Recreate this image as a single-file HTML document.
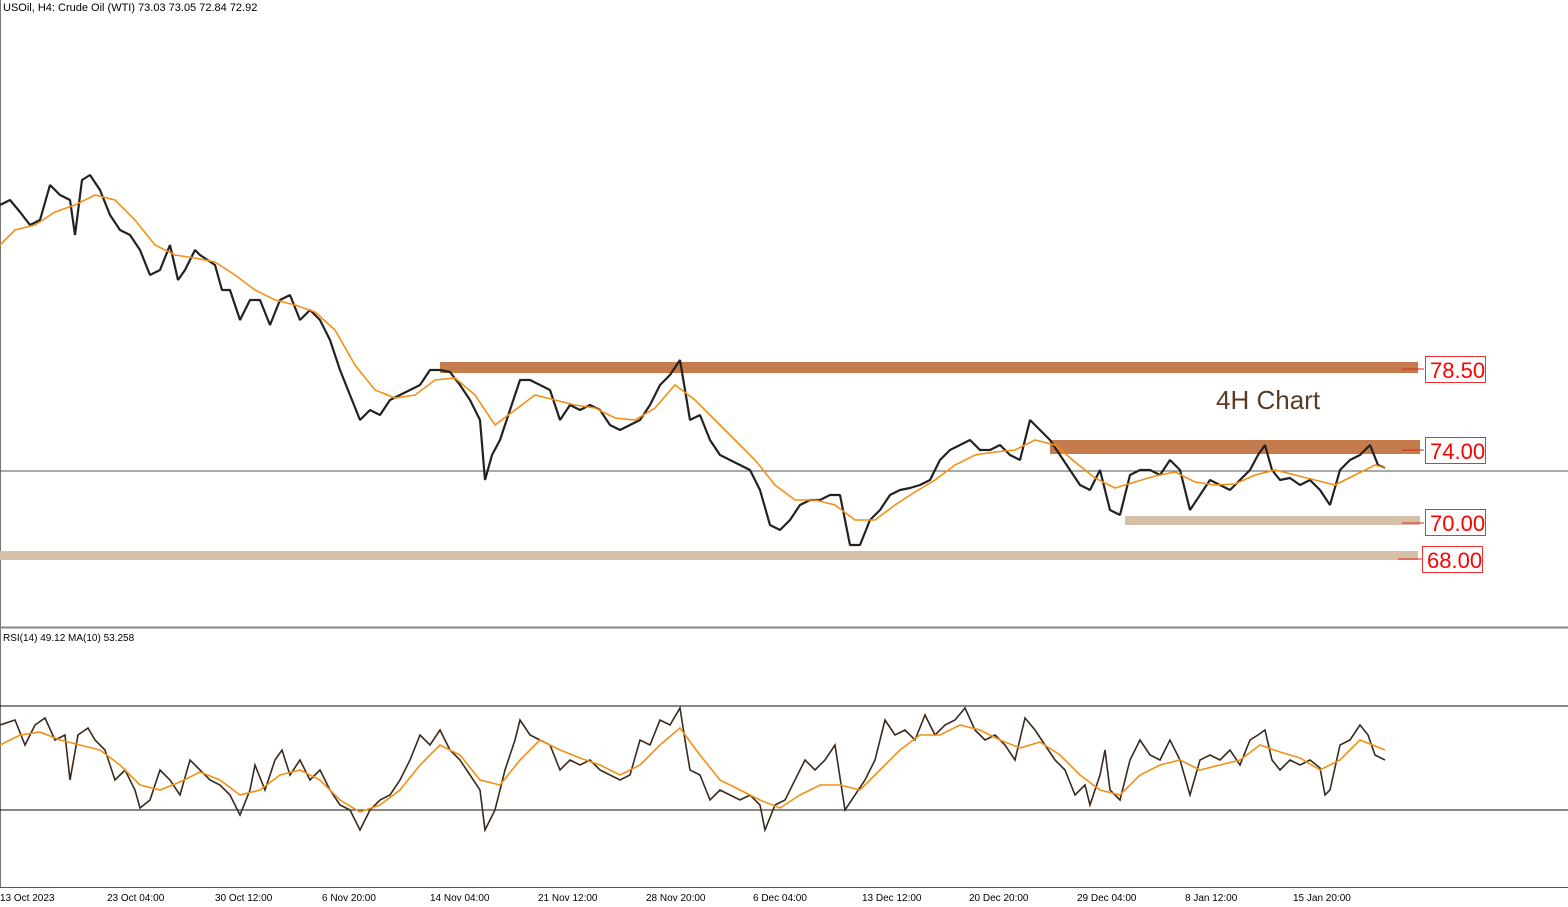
<!DOCTYPE html>
<html><head><meta charset="utf-8"><style>
html,body{margin:0;padding:0;background:#fff;width:1568px;height:907px;overflow:hidden;font-family:"Liberation Sans",sans-serif}
svg{display:block}
</style></head><body>
<svg width="1568" height="907" xmlns="http://www.w3.org/2000/svg" font-family="Liberation Sans, sans-serif">
<rect width="1568" height="907" fill="#fff"/>
<line x1="0.5" y1="0" x2="0.5" y2="887" stroke="#777"/>
<text x="3" y="11" font-size="11" fill="#000">USOil, H4:  Crude Oil (WTI)  73.03 73.05 72.84 72.92</text>
<!-- bands -->
<rect x="440" y="362" width="978" height="11" fill="#c47c4c"/>
<rect x="1050" y="440" width="370" height="14" fill="#c47c4c"/>
<rect x="1125" y="516" width="295" height="9" fill="#d6bfa7"/>
<rect x="0" y="551" width="1418" height="9" fill="#d6bfa7"/>
<line x1="0" y1="471" x2="1568" y2="471" stroke="#555" stroke-width="1"/>
<g stroke="#e02020" stroke-width="1"><line x1="1402" y1="369" x2="1424" y2="369"/><line x1="1402" y1="450" x2="1424" y2="450"/><line x1="1402" y1="523" x2="1424" y2="523"/><line x1="1398" y1="559" x2="1422" y2="559"/></g>
<g fill="#fff" stroke="#f03030"><rect x="1425.5" y="356.5" width="60" height="26"/><rect x="1425.5" y="437.5" width="60" height="26"/><rect x="1425.5" y="509.5" width="60" height="26"/><rect x="1422.5" y="546.5" width="60" height="26"/></g>
<g fill="#f00" font-size="22"><text x="1430" y="378">78.50</text><text x="1430" y="459">74.00</text><text x="1430" y="531">70.00</text><text x="1427" y="568">68.00</text></g>
<text x="1216" y="409" font-size="26" fill="#5a3a22">4H Chart</text>
<!-- price -->
<polyline fill="none" stroke="#222" stroke-width="2.2" stroke-linejoin="bevel" points="0,205 10,200 20,212 30,225 40,220 50,185 60,195 70,200 75,235 82,180 90,175 100,190 110,215 120,230 130,235 140,250 150,275 160,270 170,245 178,280 185,270 195,250 200,255 215,265 222,290 230,290 240,320 250,300 260,300 270,325 280,300 290,295 300,320 310,310 320,320 330,340 340,370 350,395 360,420 370,410 380,415 390,400 400,395 410,390 420,385 430,370 440,370 450,372 460,385 470,400 480,420 485,480 492,455 500,440 510,410 520,380 530,380 540,385 550,390 560,420 570,405 580,410 590,405 600,410 610,425 620,430 630,425 640,420 650,405 660,385 670,375 680,360 690,420 700,415 710,440 720,455 730,460 740,465 750,470 760,490 770,525 780,530 790,520 800,505 810,500 820,500 830,495 840,495 850,545 860,545 870,520 880,510 890,495 900,490 910,488 920,485 930,480 940,460 950,450 960,445 970,440 980,450 990,450 1000,445 1010,455 1020,460 1030,420 1040,430 1050,440 1060,455 1070,470 1080,485 1090,490 1100,470 1110,510 1120,515 1130,475 1140,470 1150,470 1160,475 1170,460 1180,470 1190,510 1200,495 1210,480 1220,485 1230,490 1240,480 1250,470 1258,455 1265,445 1272,470 1280,480 1290,478 1300,485 1310,480 1320,490 1330,505 1340,470 1350,460 1360,455 1370,445 1378,465 1385,468"/>
<polyline fill="none" stroke="#f39014" stroke-width="1.6" points="0,245 15,230 35,225 55,212 75,205 95,195 115,200 135,220 155,245 175,255 195,258 215,262 235,275 255,290 275,300 295,305 315,312 335,330 355,365 375,390 395,398 415,395 435,380 455,378 475,395 495,425 515,410 535,395 555,400 575,405 595,408 615,418 635,420 655,408 675,385 695,400 715,420 735,440 755,460 775,485 795,500 815,500 835,505 855,520 875,520 895,505 915,492 935,480 955,465 975,455 995,452 1015,450 1035,440 1055,445 1075,462 1095,478 1115,488 1135,482 1155,476 1175,472 1195,482 1215,485 1235,484 1255,475 1275,470 1295,475 1315,480 1335,485 1355,475 1375,465 1385,468"/>
<!-- separator -->
<line x1="0" y1="627.5" x2="1568" y2="627.5" stroke="#888" stroke-width="2"/>
<text x="3" y="641" font-size="10" fill="#000">RSI(14) 49.12 MA(10) 53.258</text>
<line x1="0" y1="706" x2="1568" y2="706" stroke="#111"/>
<line x1="0" y1="810" x2="1568" y2="810" stroke="#111"/>
<polyline fill="none" stroke="#3a2a1c" stroke-width="1.6" points="0,725 15,720 25,745 35,725 45,718 55,740 65,735 70,780 78,735 88,728 95,740 105,750 115,780 125,770 135,790 140,808 150,800 160,770 170,780 180,795 190,760 200,770 210,780 220,785 230,795 240,815 250,790 255,765 265,790 275,760 282,750 290,775 300,760 310,780 320,770 330,790 340,805 350,810 360,830 370,810 380,800 390,795 400,780 410,760 420,735 430,745 440,730 450,750 460,760 470,775 480,790 485,830 495,810 505,770 515,740 520,720 530,735 540,740 550,745 560,770 570,760 580,765 590,760 600,770 610,775 620,780 630,775 640,740 650,745 660,720 670,725 680,708 685,740 690,770 700,775 710,800 720,790 730,795 740,800 750,795 760,805 765,830 775,805 785,800 795,780 805,760 815,770 825,760 835,745 845,810 855,795 865,780 875,760 885,720 895,735 905,730 915,740 925,715 935,735 945,725 955,720 965,708 975,730 985,740 995,735 1005,745 1015,760 1025,718 1035,730 1045,745 1055,760 1065,770 1075,795 1085,785 1090,805 1100,775 1105,750 1110,790 1120,800 1130,760 1140,740 1150,755 1160,760 1170,740 1180,760 1190,795 1200,760 1210,755 1220,760 1230,750 1240,765 1250,740 1258,735 1265,730 1272,760 1280,770 1290,760 1300,765 1310,760 1320,768 1325,795 1330,790 1340,745 1350,740 1360,725 1368,735 1375,755 1385,760"/>
<polyline fill="none" stroke="#f39014" stroke-width="1.6" points="0,745 20,735 40,732 60,740 80,745 100,750 120,765 140,785 160,790 180,782 200,772 220,780 240,795 260,790 280,775 300,770 320,780 340,800 360,812 380,805 400,790 420,765 440,745 460,755 480,780 500,785 520,760 540,740 560,750 580,758 600,765 620,775 640,765 660,745 680,728 700,755 720,780 740,790 760,800 780,808 800,795 820,785 840,785 860,790 880,770 900,750 920,735 940,735 960,725 980,730 1000,740 1020,748 1040,742 1060,755 1080,775 1100,790 1120,795 1140,775 1160,765 1180,760 1200,770 1220,765 1240,760 1260,745 1280,752 1300,758 1320,770 1340,760 1360,740 1385,750"/>
<!-- x axis -->
<line x1="0" y1="887.5" x2="1568" y2="887.5" stroke="#555"/>
<g font-size="10" fill="#000"><text x="0" y="901">13 Oct 2023</text><text x="107" y="901">23 Oct 04:00</text><text x="215" y="901">30 Oct 12:00</text><text x="322" y="901">6 Nov 20:00</text><text x="430" y="901">14 Nov 04:00</text><text x="538" y="901">21 Nov 12:00</text><text x="646" y="901">28 Nov 20:00</text><text x="753" y="901">6 Dec 04:00</text><text x="862" y="901">13 Dec 12:00</text><text x="969" y="901">20 Dec 20:00</text><text x="1077" y="901">29 Dec 04:00</text><text x="1185" y="901">8 Jan 12:00</text><text x="1293" y="901">15 Jan 20:00</text></g>
</svg>
</body></html>
